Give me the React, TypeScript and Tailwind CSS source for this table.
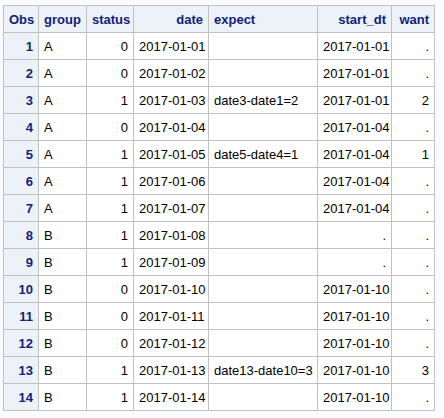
import React from 'react';

type Row = {
  obs: number;
  group: string;
  status: number;
  date: string;
  expect: string;
  start: string;
  want: string;
};

const rows: Row[] = [
  { obs: 1, group: 'A', status: 0, date: '2017-01-01', expect: '', start: '2017-01-01', want: '.' },
  { obs: 2, group: 'A', status: 0, date: '2017-01-02', expect: '', start: '2017-01-01', want: '.' },
  { obs: 3, group: 'A', status: 1, date: '2017-01-03', expect: 'date3-date1=2', start: '2017-01-01', want: '2' },
  { obs: 4, group: 'A', status: 0, date: '2017-01-04', expect: '', start: '2017-01-04', want: '.' },
  { obs: 5, group: 'A', status: 1, date: '2017-01-05', expect: 'date5-date4=1', start: '2017-01-04', want: '1' },
  { obs: 6, group: 'A', status: 1, date: '2017-01-06', expect: '', start: '2017-01-04', want: '.' },
  { obs: 7, group: 'A', status: 1, date: '2017-01-07', expect: '', start: '2017-01-04', want: '.' },
  { obs: 8, group: 'B', status: 1, date: '2017-01-08', expect: '', start: '.', want: '.' },
  { obs: 9, group: 'B', status: 1, date: '2017-01-09', expect: '', start: '.', want: '.' },
  { obs: 10, group: 'B', status: 0, date: '2017-01-10', expect: '', start: '2017-01-10', want: '.' },
  { obs: 11, group: 'B', status: 0, date: '2017-01-11', expect: '', start: '2017-01-10', want: '.' },
  { obs: 12, group: 'B', status: 0, date: '2017-01-12', expect: '', start: '2017-01-10', want: '.' },
  { obs: 13, group: 'B', status: 1, date: '2017-01-13', expect: 'date13-date10=3', start: '2017-01-10', want: '3' },
  { obs: 14, group: 'B', status: 1, date: '2017-01-14', expect: '', start: '2017-01-10', want: '.' },
];

const th = 'border border-[#c1c1c1] bg-[#edf2f9] text-[#112277] font-bold px-[5px] h-[27px]';
const td = 'border border-[#c1c1c1] bg-white text-black px-[5px] h-[27px] whitespace-nowrap';

function App() {
  return (
    <div className="min-h-screen bg-[#fafbfe] pl-[3px] pt-[5px]" style={{ fontFamily: '"Liberation Sans", Arial, sans-serif' }}>
      <table className="border-collapse table-fixed text-[13px] leading-none" style={{ width: 431 }}>
        <colgroup>
          <col className="w-[35px]" />
          <col className="w-[48px]" />
          <col className="w-[47px]" />
          <col className="w-[75px]" />
          <col className="w-[109px]" />
          <col className="w-[74px]" />
          <col className="w-[43px]" />
        </colgroup>
        <thead>
          <tr>
            <th className={`${th} text-center`}>Obs</th>
            <th className={`${th} text-left`}>group</th>
            <th className={`${th} text-right`}>status</th>
            <th className={`${th} text-right`}>date</th>
            <th className={`${th} text-left`}>expect</th>
            <th className={`${th} text-right`}>start_dt</th>
            <th className={`${th} text-right`}>want</th>
          </tr>
        </thead>
        <tbody>
          {rows.map((r) => (
            <tr key={r.obs}>
              <th className={`${th} text-right`}>{r.obs}</th>
              <td className={`${td} text-left`}>{r.group}</td>
              <td className={`${td} text-right`}>{r.status}</td>
              <td className={`${td} text-right`}>{r.date}</td>
              <td className={`${td} text-left`}>{r.expect}</td>
              <td className={`${td} text-right`}>{r.start}</td>
              <td className={`${td} text-right`}>{r.want}</td>
            </tr>
          ))}
        </tbody>
      </table>
    </div>
  );
}

export default App;
